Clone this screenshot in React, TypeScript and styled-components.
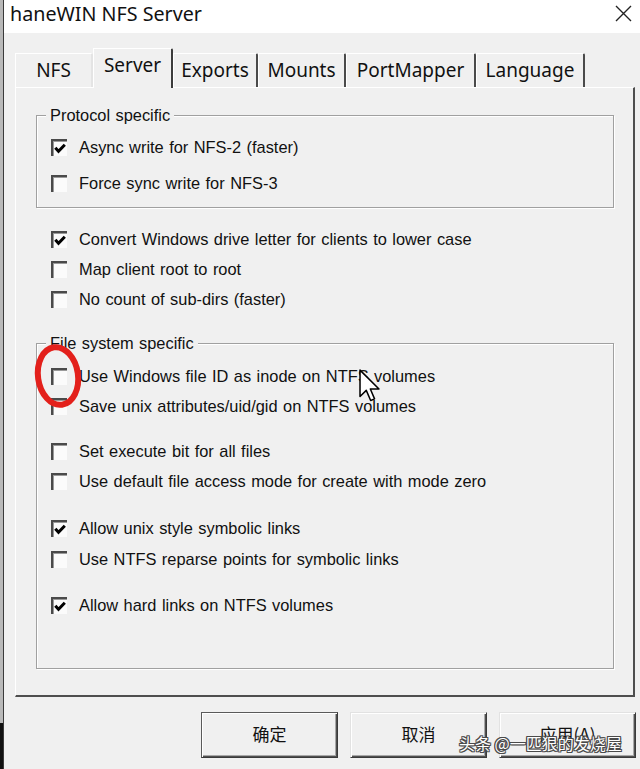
import React from 'react';
import styled, { createGlobalStyle } from 'styled-components';

const GlobalStyle = createGlobalStyle`
  html, body {
    margin: 0;
    padding: 0;
    background: #f0f0f0;
    overflow: hidden;
  }
`;

const Root = styled.div`
  position: relative;
  display: flex;
  width: 640px;
  height: 769px;
  overflow: hidden;
  background: #f0f0f0;
`;

const BehindEdge = styled.div`
  width: 3px;
  flex: none;
  background: linear-gradient(to bottom, #b9b9b9 0, #b9b9b9 94%, #111 94%, #111 100%);
  border-right: 1px solid #3a3a3a;
`;

const Dialog = styled.div`
  flex: 1;
  display: flex;
  flex-direction: column;
  min-width: 0;
`;

const TitleBar = styled.div`
  height: 33px;
  flex: none;
  display: flex;
  align-items: center;
  justify-content: space-between;
  padding: 0 8px 0 6px;
  background: #ffffff;
  box-sizing: border-box;
`;

const Title = styled.span`
  font-family: 'Noto Sans', sans-serif;
  font-size: 19.7px;
  color: #111;
  margin-top: -7px;
`;

const CloseButton = styled.span`
  display: flex;
  margin-top: -7px;
`;

const Body = styled.div`
  flex: 1;
  display: flex;
  flex-direction: column;
  padding: 14px 4px 0 11px;
`;

const TabStrip = styled.div`
  display: flex;
  align-items: flex-end;
  height: 40px;
  position: relative;
  z-index: 1;
`;

const Tab = styled.div<{ $active?: boolean; $w: number }>`
  box-sizing: border-box;
  width: ${({ $w }) => $w}px;
  height: ${({ $active }) => ($active ? 40 : 34)}px;
  margin-bottom: ${({ $active }) => ($active ? -1 : 0)}px;
  display: flex;
  align-items: center;
  justify-content: center;
  padding-bottom: ${({ $active }) => ($active ? 7 : 1)}px;
  font-family: 'Noto Sans', sans-serif;
  font-size: 19px;
  color: #111;
  background: #f0f0f0;
  border-top: 1px solid #ffffff;
  border-left: 1px solid #ffffff;
  border-right: 2px solid ${({ $active }) => ($active ? '#3c3c3c' : '#4a4a4a')};
  border-top-right-radius: 2px;
`;

const FirstTab = styled(Tab)`
  border-right-color: #e4e4e4;
`;

const Panel = styled.div`
  box-sizing: border-box;
  width: 620px;
  height: 610px;
  display: flex;
  flex-direction: column;
  padding: 0 19px 0 20px;
  border-top: 1px solid #ffffff;
  border-left: 1px solid #ffffff;
  border-right: 2px solid #4e4e4e;
  border-bottom: 2px solid #4e4e4e;
`;

const GroupBox = styled.div<{ $top: number; $padTop: number; $padBottom: number }>`
  position: relative;
  margin-top: ${({ $top }) => $top}px;
  padding: ${({ $padTop }) => $padTop}px 0 ${({ $padBottom }) => $padBottom}px 14px;
  border: 1px solid #a0a0a0;
  box-shadow: 1px 1px 0 #ffffff, inset 1px 1px 0 #ffffff;
`;

const Legend = styled.span`
  position: absolute;
  top: -11px;
  left: 9px;
  padding: 0 4px;
  background: #f0f0f0;
  font-family: 'Liberation Sans', Arial, sans-serif;
  font-size: 16.4px;
  line-height: 20px;
  word-spacing: 0.8px;
  color: #111;
`;

const Loose = styled.div<{ $top: number }>`
  margin-top: ${({ $top }) => $top}px;
  padding-left: 15px;
`;

const Row = styled.div<{ $gap?: number }>`
  display: flex;
  align-items: center;
  height: 30px;
  margin-top: ${({ $gap }) => $gap ?? 0}px;
  gap: 12px;
  font-family: 'Liberation Sans', Arial, sans-serif;
  font-size: 16.4px;
  word-spacing: 0.9px;
  color: #111;
  white-space: nowrap;
`;

const Box = styled.span`
  box-sizing: border-box;
  width: 16px;
  height: 17px;
  flex: none;
  display: flex;
  align-items: center;
  justify-content: center;
  background: #fbfbfb;
  border-top: 2px solid #4a4a4a;
  border-left: 2px solid #4a4a4a;
  box-shadow: inset 1px 1px 0 #9a9a9a;
`;

const ButtonRow = styled.div`
  display: flex;
  justify-content: flex-end;
  gap: 12px;
  margin-top: 15px;
`;

const Button = styled.div<{ $default?: boolean }>`
  box-sizing: border-box;
  width: 137px;
  height: 46px;
  display: flex;
  align-items: center;
  justify-content: center;
  padding-bottom: 3px;
  font-family: 'Noto Sans CJK SC', sans-serif;
  font-size: 17px;
  color: #111;
  background: #f0f0f0;
  border: 1px solid ${({ $default }) => ($default ? '#5a5a5a' : '#e2e2e2')};
  border-right-color: #3a3a3a;
  border-bottom-color: #3a3a3a;
  box-shadow: inset 1px 1px 0 #ffffff, inset -1px -1px 0 #505050, inset -2px -2px 0 #a8a8a8;
`;

const Watermark = styled.span`
  position: absolute;
  left: 459px;
  top: 731px;
  font-family: 'Noto Sans CJK SC', sans-serif;
  font-size: 16px;
  color: #ffffff;
  text-shadow: 1px 0 0 #4a4a4a, -1px 0 0 #4a4a4a, 0 1px 0 #4a4a4a, 0 -1px 0 #4a4a4a,
    1px 1px 0 #4a4a4a, -1px -1px 0 #4a4a4a, 1px -1px 0 #4a4a4a, -1px 1px 0 #4a4a4a;
`;

const Annotation = styled.svg`
  position: absolute;
  left: 31px;
  top: 341px;
  pointer-events: none;
`;

const Cursor = styled.svg`
  position: absolute;
  left: 359px;
  top: 369px;
  pointer-events: none;
`;

const Check = () => (
  <svg width="12" height="11" viewBox="0 0 12 11">
    <path d="M1.3 4.8 L4.5 8.3 L10.8 1.8" fill="none" stroke="#000" strokeWidth="3" />
  </svg>
);

const CheckRow = ({ label, checked, gap }: { label: string; checked?: boolean; gap?: number }) => (
  <Row $gap={gap}>
    <Box>{checked && <Check />}</Box>
    <span>{label}</span>
  </Row>
);

const tabs = [
  { label: 'NFS', w: 78 },
  { label: 'Server', w: 80, active: true },
  { label: 'Exports', w: 85 },
  { label: 'Mounts', w: 88 },
  { label: 'PortMapper', w: 130 },
  { label: 'Language', w: 109 },
];

export default function App() {
  return (
    <Root>
      <GlobalStyle />
      <BehindEdge />
      <Dialog>
        <TitleBar>
          <Title>haneWIN NFS Server</Title>
          <CloseButton>
            <svg width="17" height="17" viewBox="0 0 17 17">
              <path d="M1 1 L16 16 M16 1 L1 16" stroke="#222" strokeWidth="1.4" />
            </svg>
          </CloseButton>
        </TitleBar>
        <Body>
          <TabStrip>
            {tabs.map((t, i) =>
              i === 0 ? (
                <FirstTab key={t.label} $w={t.w}>{t.label}</FirstTab>
              ) : (
                <Tab key={t.label} $w={t.w} $active={t.active}>{t.label}</Tab>
              )
            )}
          </TabStrip>
          <Panel>
            <GroupBox $top={27} $padTop={16} $padBottom={9}>
              <Legend>Protocol specific</Legend>
              <CheckRow label="Async write for NFS-2 (faster)" checked />
              <CheckRow label="Force sync write for NFS-3" gap={6} />
            </GroupBox>
            <Loose $top={16}>
              <CheckRow label="Convert Windows drive letter for clients to lower case" checked />
              <CheckRow label="Map client root to root" />
              <CheckRow label="No count of sub-dirs (faster)" />
            </Loose>
            <GroupBox $top={29} $padTop={17} $padBottom={48}>
              <Legend>File system specific</Legend>
              <CheckRow label="Use Windows file ID as inode on NTFS volumes" />
              <CheckRow label="Save unix attributes/uid/gid on NTFS volumes" />
              <CheckRow label="Set execute bit for all files" gap={15} />
              <CheckRow label="Use default file access mode for create with mode zero" />
              <CheckRow label="Allow unix style symbolic links" checked gap={17} />
              <CheckRow label="Use NTFS reparse points for symbolic links" gap={1} />
              <CheckRow label="Allow hard links on NTFS volumes" checked gap={16} />
            </GroupBox>
          </Panel>
          <ButtonRow>
            <Button $default>确定</Button>
            <Button>取消</Button>
            <Button>应用(A)</Button>
          </ButtonRow>
        </Body>
      </Dialog>
      <Annotation width="56" height="70" viewBox="0 0 56 70">
        <ellipse cx="27" cy="35" rx="20" ry="29" fill="none" stroke="#e3201b" strokeWidth="6" transform="rotate(-8 27 35)" />
      </Annotation>
      <Cursor width="22" height="34" viewBox="0 0 13 20">
        <path d="M0.6 0.6 L0.6 16.2 L4.3 12.6 L6.9 18.6 L9.2 17.6 L6.7 11.8 L11.8 11.8 Z" fill="#fff" stroke="#000" strokeWidth="0.9" strokeLinejoin="round" />
      </Cursor>
      <Watermark>头条 @一匹狠的发烧屋</Watermark>
    </Root>
  );
}
